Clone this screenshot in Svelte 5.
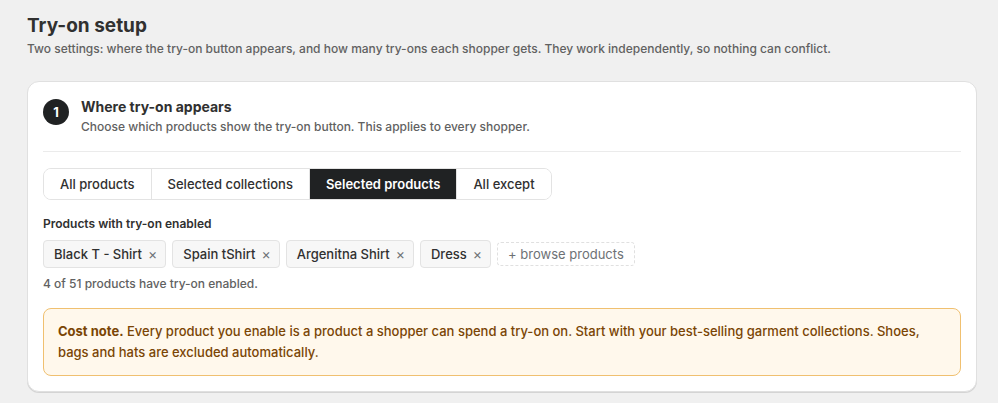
<script lang="ts">
  const scopes = [
    { value: "all", label: "All products" },
    { value: "collections", label: "Selected collections" },
    { value: "products", label: "Selected products" },
    { value: "except", label: "All except" }
  ];

  const totalProducts = 51;

  let scope = $state("products");
  let products = $state(["Black T - Shirt", "Spain tShirt", "Argenitna Shirt", "Dress"]);

  const removeProduct = (name: string) => {
    products = products.filter((product) => product !== name);
  };
</script>

<main class="page">
  <header class="page-header">
    <h1>Try-on setup</h1>
    <p>
      Two settings: where the try-on button appears, and how many try-ons each shopper gets. They
      work independently, so nothing can conflict.
    </p>
  </header>

  <section class="card">
    <div class="card-header">
      <span class="step">1</span>
      <div>
        <h2>Where try-on appears</h2>
        <p>Choose which products show the try-on button. This applies to every shopper.</p>
      </div>
    </div>

    <div class="segments" role="group" aria-label="Where try-on appears">
      {#each scopes as option}
        <button
          type="button"
          class="segment"
          class:segment--active={scope === option.value}
          aria-pressed={scope === option.value}
          onclick={() => (scope = option.value)}
        >
          {option.label}
        </button>
      {/each}
    </div>

    <h3>Products with try-on enabled</h3>
    <div class="tags">
      {#each products as product}
        <span class="tag">
          {product}
          <button
            type="button"
            class="tag-remove"
            aria-label="Remove {product}"
            onclick={() => removeProduct(product)}>×</button
          >
        </span>
      {/each}
      <button type="button" class="browse">+ browse products</button>
    </div>
    <p class="summary">{products.length} of {totalProducts} products have try-on enabled.</p>

    <div class="note">
      <strong>Cost note.</strong> Every product you enable is a product a shopper can spend a try-on
      on. Start with your best-selling garment collections. Shoes, bags and hats are excluded
      automatically.
    </div>
  </section>
</main>

<style>
  :global(body) {
    margin: 0;
    background: #f0f0f0;
  }

  .page {
    padding: 13px 21px 10px 27px;
    color: #303030;
    font-family: Inter, sans-serif;
    font-size: 13px;
    font-weight: 450;
    line-height: 20px;
  }

  h1,
  h2,
  h3,
  p {
    margin: 0;
  }

  .page-header {
    margin-bottom: 22px;
  }

  h1 {
    font-size: 19px;
    font-weight: 700;
    line-height: 26px;
  }

  .page-header p,
  .card-header p,
  .summary {
    color: #616161;
    font-size: 12px;
  }

  .card {
    padding: 15px;
    border: 1px solid #e0e0e0;
    border-radius: 12px;
    background: #ffffff;
    box-shadow: 0 1px 0 #d4d4d4;
  }

  .card-header {
    display: flex;
    gap: 12px;
    margin-bottom: 16px;
    padding-bottom: 14px;
    border-bottom: 1px solid #ebebeb;
  }

  .step {
    display: flex;
    flex-shrink: 0;
    align-items: center;
    justify-content: center;
    width: 26px;
    height: 26px;
    margin-top: 2px;
    border-radius: 50%;
    background: #202223;
    color: #ffffff;
    font-weight: 650;
  }

  h2 {
    font-size: 14px;
    font-weight: 650;
    line-height: 20px;
  }

  button {
    font: inherit;
    cursor: pointer;
  }

  .segments {
    display: inline-flex;
    overflow: hidden;
    border: 1px solid #e3e3e3;
    border-radius: 8px;
  }

  .segment {
    padding: 5px 16px;
    border: 0;
    background: #ffffff;
    color: #303030;
  }

  .segment + .segment {
    border-left: 1px solid #e3e3e3;
  }

  .segment--active {
    background: #202223;
    color: #ffffff;
    font-weight: 600;
  }

  h3 {
    margin: 14px 0 6px;
    font-size: 12px;
    font-weight: 600;
    line-height: 20px;
  }

  .tags {
    display: flex;
    flex-wrap: wrap;
    align-items: center;
    gap: 6px;
    margin-bottom: 6px;
  }

  .tag {
    display: inline-flex;
    align-items: center;
    gap: 6px;
    padding: 3px 8px 3px 10px;
    border: 1px solid #e3e3e3;
    border-radius: 4px;
    background: #f7f7f7;
  }

  .tag-remove {
    padding: 0;
    border: 0;
    background: none;
    color: #6d7175;
    font-size: 14px;
    font-weight: 400;
  }

  .browse {
    padding: 1px 10px;
    border: 1px dashed #e0e0e0;
    border-radius: 4px;
    background: #ffffff;
    color: #6d7175;
    font-weight: 400;
  }

  .note {
    margin-top: 14px;
    padding: 12px 14px;
    border: 1px solid #f0c070;
    border-radius: 8px;
    background: #fff8ec;
    color: #7a4504;
    line-height: 21px;
  }

  strong {
    font-weight: 650;
  }
</style>
